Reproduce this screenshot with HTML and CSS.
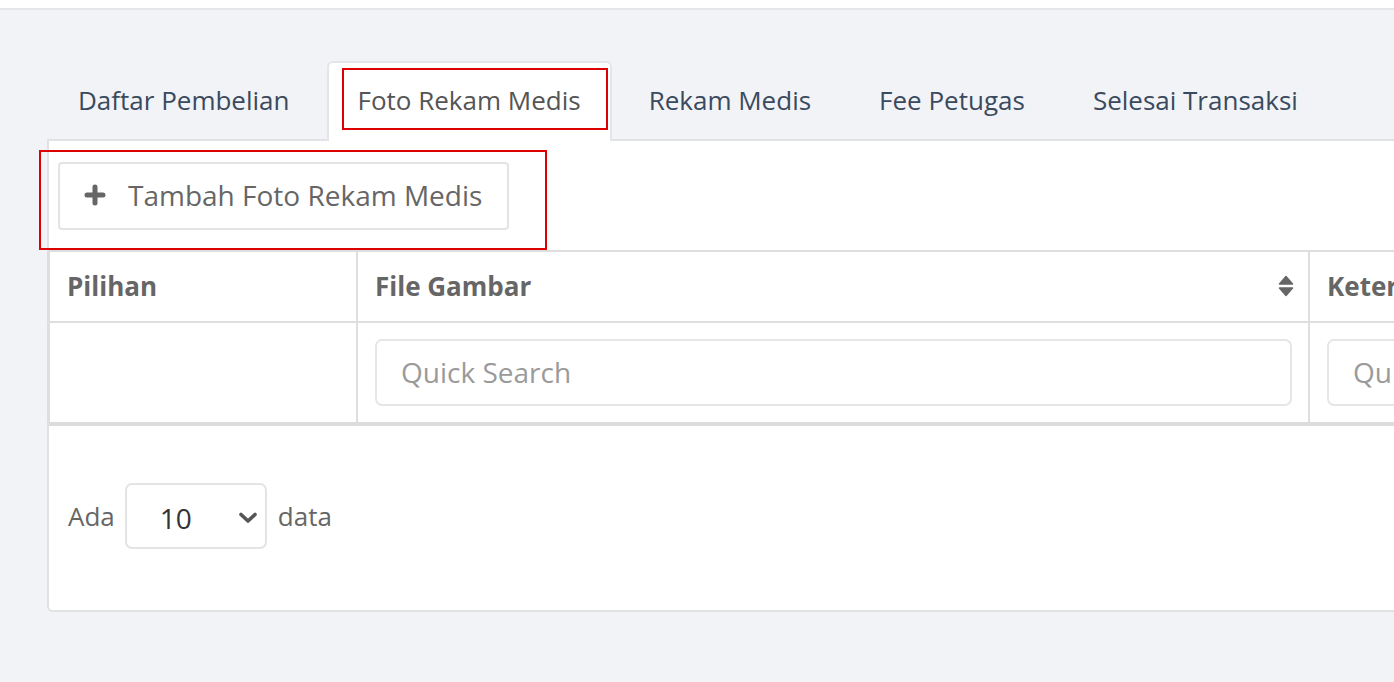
FILE: index.html
```html
<!DOCTYPE html>
<html>
<head>
<meta charset="utf-8">
<link rel="stylesheet" href="styles.css">
</head>
<body>
<div class="topbar"></div>
<div class="page">
  <div class="tabs">
    <div class="tab">Daftar Pembelian</div>
    <div class="tab active">Foto Rekam Medis<span class="mark mark-tab"></span></div>
    <div class="tab">Rekam Medis</div>
    <div class="tab">Fee Petugas</div>
    <div class="tab">Selesai Transaksi</div>
  </div>
  <div class="card">
    <div class="toolbar">
      <button class="btn"><svg class="plus" viewBox="0 0 22 22" width="22" height="22"><path d="M11 3v16M3 11h16" stroke="#666" stroke-width="5" stroke-linecap="round"/></svg><span>Tambah Foto Rekam Medis</span></button>
      <span class="mark mark-btn"></span>
    </div>
    <div class="table">
      <div class="row head">
        <div class="cell c1">Pilihan</div>
        <div class="cell c2"><span>File Gambar</span><svg class="sort" viewBox="0 0 16 22" width="16" height="22"><path d="M8 1.5 L14.5 9 H1.5 Z M1.5 13 H14.5 L8 20.5 Z" fill="#666" stroke="#666" stroke-width="1.5" stroke-linejoin="round"/></svg></div>
        <div class="cell c3">Keterangan</div>
      </div>
      <div class="row filter">
        <div class="cell c1"></div>
        <div class="cell c2"><div class="input">Quick Search</div></div>
        <div class="cell c3"><div class="input">Quick Search</div></div>
      </div>
    </div>
    <div class="footer">
      <span>Ada</span>
      <div class="select"><span>10</span><svg viewBox="0 0 20 12" width="20" height="12"><path d="M3 2.5 L10 9 L17 2.5" fill="none" stroke="#555" stroke-width="3.6" stroke-linecap="round" stroke-linejoin="round"/></svg></div>
      <span>data</span>
    </div>
  </div>
</div>
</body>
</html>
```
FILE: styles.css
```css
html, body {
  margin: 0;
  padding: 0;
}
body {
  background: #f2f3f7;
  font-family: "Open Sans", "Noto Sans", sans-serif;
  width: 1394px;
  height: 682px;
  overflow: hidden;
}
.topbar {
  height: 8px;
  background: #fff;
  border-bottom: 2px solid #e4e6ea;
}
.page {
  padding: 51px 0 0 47px;
}
.tabs {
  display: flex;
  align-items: stretch;
  height: 78px;
  border-bottom: 2px solid #e1e2e5;
}
.tab {
  position: relative;
  display: flex;
  align-items: center;
  padding: 0 29px 3px;
  margin-right: 6px;
  font-size: 26px;
  color: #3a4a5e;
  border: 2px solid transparent;
  border-bottom: none;
  border-radius: 6px 6px 0 0;
  flex-shrink: 0;
  white-space: nowrap;
}
.tab.active {
  background: #fff;
  border-color: #e4e5e8;
  color: #555;
  margin-bottom: -2px;
  padding: 0 29px 5px;
}
.mark {
  position: absolute;
  border: 2px solid #dd0000;
  pointer-events: none;
}
.mark-tab {
  left: 13px;
  right: 2px;
  top: 5px;
  bottom: 11px;
}
.card {
  width: 1500px;
  height: 471px;
  background: #fff;
  border: 2px solid #e1e1e1;
  border-top: none;
  border-radius: 0 0 6px 6px;
  box-sizing: border-box;
  padding-top: 21px;
  position: relative;
}
.toolbar {
  position: relative;
  padding-left: 9px;
  height: 68px;
}
.btn {
  display: flex;
  align-items: center;
  height: 68px;
  width: 451px;
  box-sizing: border-box;
  background: #fff;
  border: 2px solid #e4e4e4;
  border-radius: 4px;
  padding: 0 0 2px 24px;
  font-family: inherit;
  font-size: 28px;
  color: #666;
  white-space: nowrap;
}
.plus {
  margin-right: 22px;
}
.mark-btn {
  left: -10px;
  top: -12px;
  width: 504px;
  height: 96px;
}
.table {
  margin-top: 20px;
  border-top: 2px solid #dedede;
  border-bottom: 4px solid #dcdcdc;
}
.row {
  display: flex;
}
.head {
  height: 69px;
  border-bottom: 2px solid #dedede;
}
.filter {
  height: 99px;
}
.cell {
  box-sizing: border-box;
  border-right: 2px solid #dedede;
  display: flex;
  align-items: center;
  flex-shrink: 0;
}
.c1 {
  width: 311px;
  padding-left: 17px;
  border-left: 3px solid #dedede;
  margin-left: -2px;
}
.c2 {
  width: 952px;
  padding: 0 16px 0 17px;
}
.c3 {
  width: 400px;
  padding-left: 17px;
  border-right: none;
}
.head .cell {
  font-weight: 700;
  font-size: 26px;
  color: #666;
  padding-bottom: 2px;
}
.head .c2 {
  justify-content: space-between;
  padding-right: 14px;
}
.input {
  box-sizing: border-box;
  width: 100%;
  height: 67px;
  border: 2px solid #e6e6e6;
  border-radius: 7px;
  display: flex;
  align-items: center;
  padding: 0 0 2px 24px;
  font-size: 28px;
  color: #9a9a9a;
  white-space: nowrap;
}
.c3 .input {
  width: 300px;
}
.footer {
  display: flex;
  align-items: center;
  padding: 57px 0 0 19px;
  font-size: 26px;
  color: #666;
}
.select {
  box-sizing: border-box;
  width: 142px;
  height: 66px;
  margin: 0 11px 0 10px;
  border: 2px solid #e4e4e4;
  border-radius: 7px;
  display: flex;
  align-items: center;
  justify-content: space-between;
  padding: 4px 7px 0 33px;
  font-size: 28px;
  color: #333;
}
```
